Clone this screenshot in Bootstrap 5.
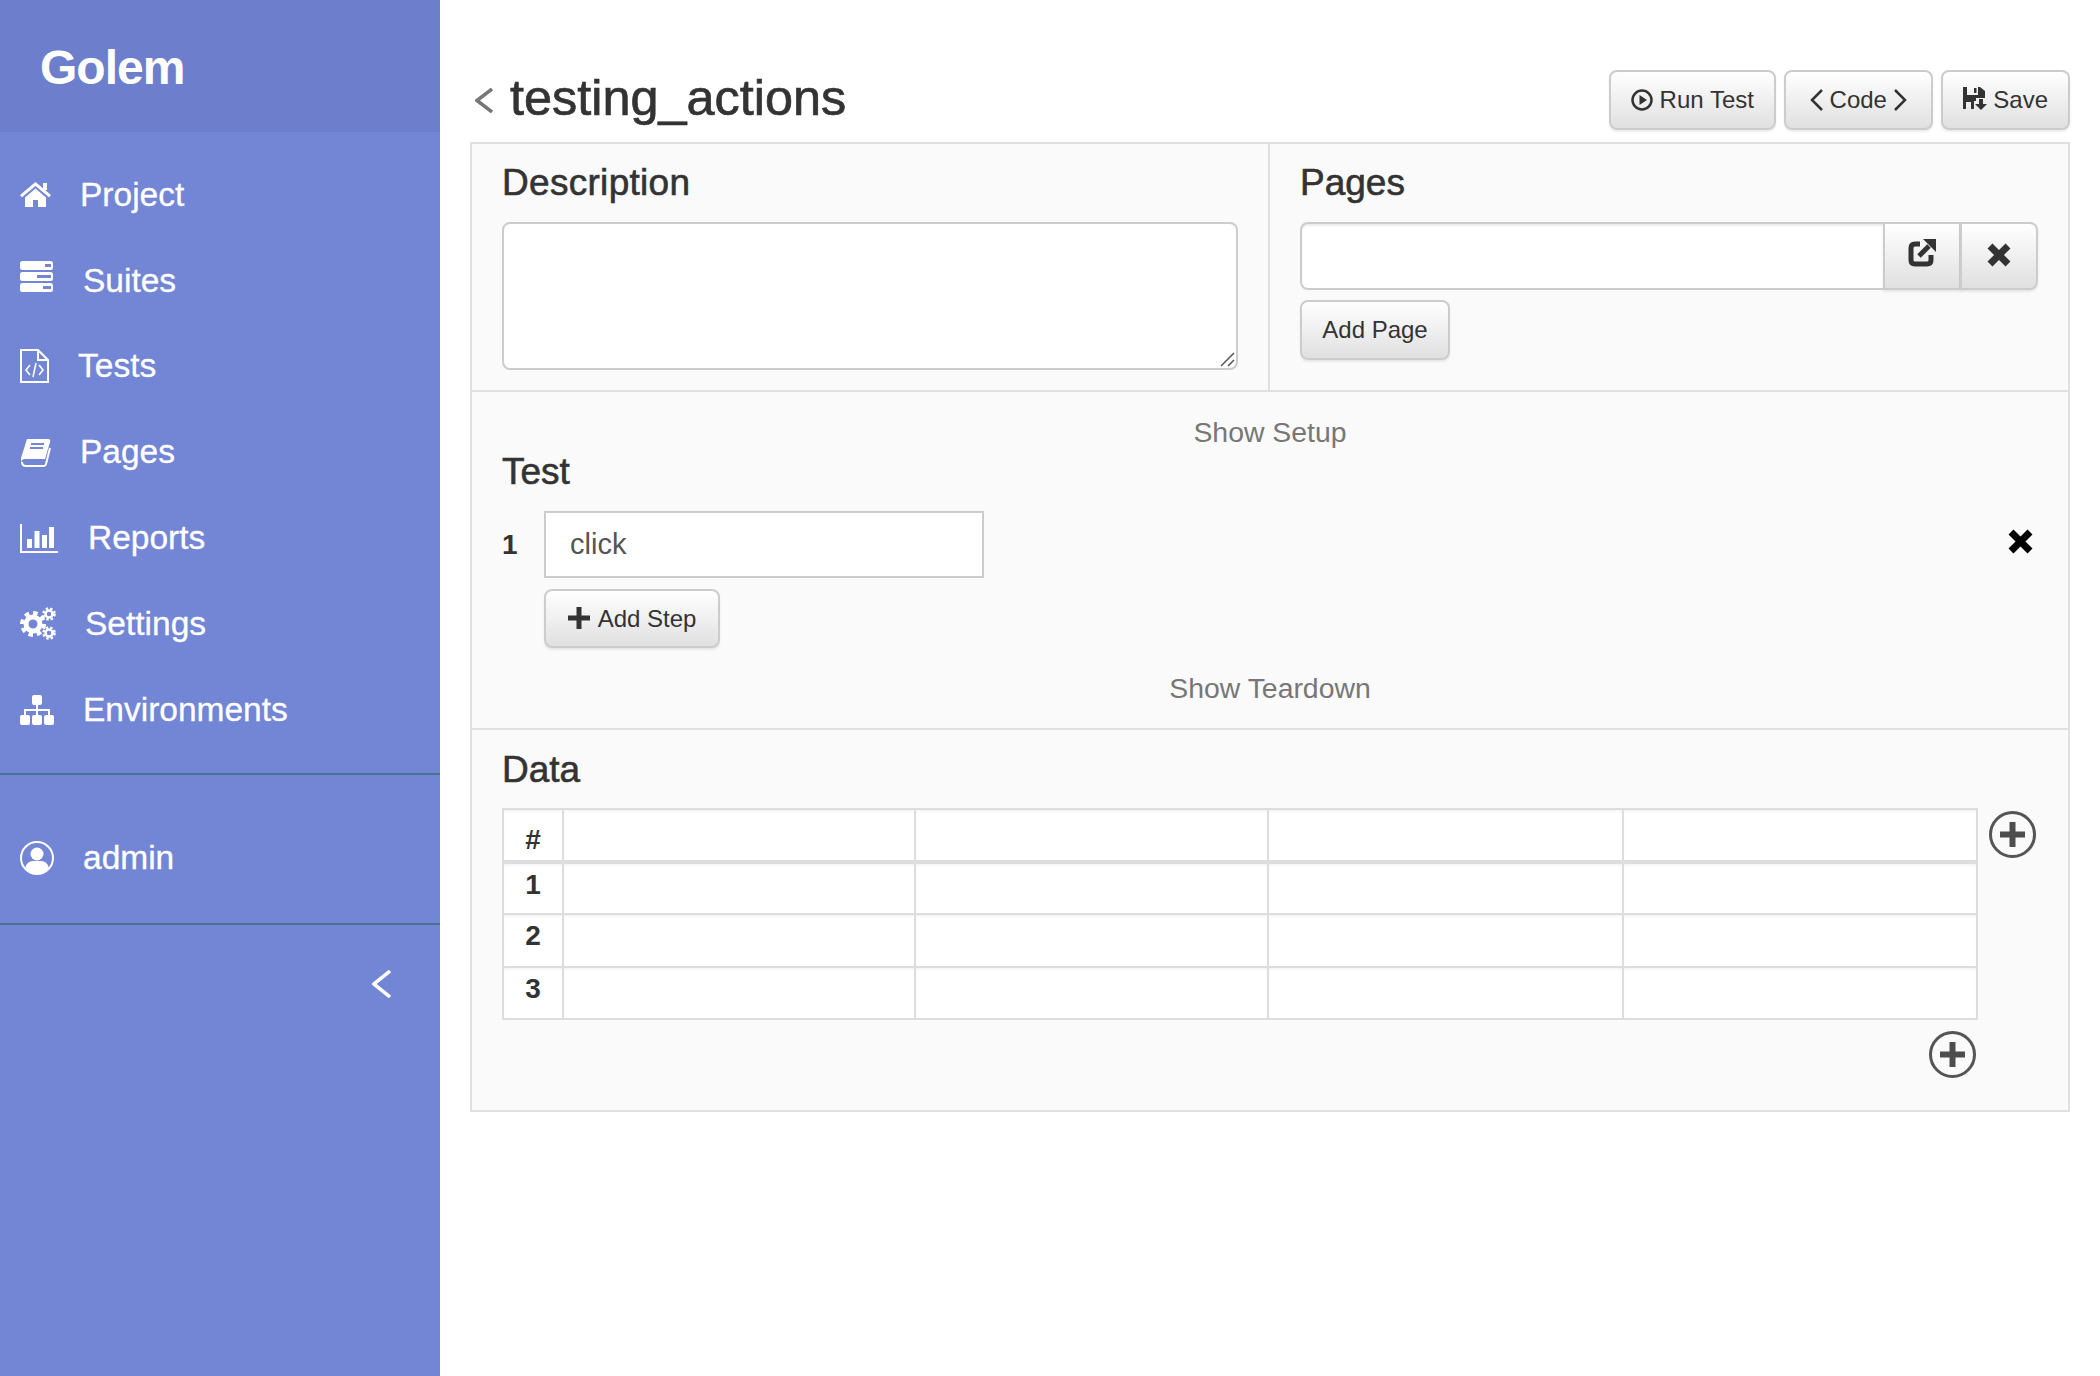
<!DOCTYPE html>
<html>
<head>
  <meta charset="utf-8">
  <title>testing_actions</title>
  <link href="https://cdn.jsdelivr.net/npm/bootstrap@5.3.3/dist/css/bootstrap.min.css" rel="stylesheet">
  <style>
    body { font-family: "Liberation Sans", Arial, sans-serif; color: #333; background: #fff; }

    /* sidebar */
    .side-bar { width: 440px; flex: none; background: #7386d5; color: #fff; min-height: 100vh; }
    .side-head { height: 132px; background: #6d7fcc; padding: 38px 0 0 40px; }
    .side-head h3 { font-size: 48px; line-height: 60px; font-weight: 700; letter-spacing: -1px; margin: 0; }
    .side-nav { padding: 20px 0 20px; border-bottom: 2px solid #47748b; }
    .side-user { padding: 41px 0 22px; border-bottom: 2px solid #47748b; }
    .side-link { display: flex; align-items: center; height: 85.8px; padding: 0 0 0 20px; color: #fff; font-size: 33.5px; -webkit-text-stroke: .3px #fff; text-decoration: none; }
    .side-link svg { flex: none; }
    .m-home { margin-right: 29px; }
    .m-suites { margin-right: 30px; margin-bottom: 8px; }
    .m-tests { margin-right: 29px; }
    .m-pages { margin-right: 29px; }
    .m-reports { margin-right: 30px; }
    .m-settings { margin-right: 29px; }
    .m-envs { margin-right: 29px; }
    .m-admin { margin-right: 29px; }
    .side-collapse { padding: 45px 49px 0 0; text-align: right; line-height: 0; }

    /* main */
    .main-area { flex: 1; padding: 70px 30px 0; min-width: 0; }
    .title-row { height: 60px; margin-bottom: 12px; }
    .page-title { font-size: 50.4px; line-height: 55px; font-weight: 400; -webkit-text-stroke: .7px #333; margin: 0 0 0 17px; }
    .back-arrow { margin: 18px 0 0 5px; flex: none; }
    .head-btns { gap: 8px; }

    .grad-btn { font-size: 24px; line-height: 34px; color: #333; padding: 10px 20px; border: 2px solid #ccc; border-radius: 8px;
      background: linear-gradient(to bottom, #fff 0, #e0e0e0 100%); box-shadow: inset 0 2px 0 rgba(255,255,255,.15), 0 2px 2px rgba(0,0,0,.075); }
    .grad-btn svg { vertical-align: -3px; }
    .code-btn { padding: 10px 24px; }

    .test-panel { border: 2px solid #e0e0e0; background: #fafafa; height: 970px; }
    .panel-part { border-bottom: 2px solid #e0e0e0; }
    .panel-part:last-child { border-bottom: 0; }
    .part-left { padding: 19px 30px 20px; border-right: 2px solid #e0e0e0; }
    .part-right { padding: 19px 30px 20px; }
    .part-title { font-size: 37px; line-height: 40px; font-weight: 400; -webkit-text-stroke: .6px #333; margin: 0; }
    .part-left .part-title { letter-spacing: .3px; }
    .desc-wrap { position: relative; margin-top: 19px; }
    .desc-box { height: 148px; border: 2px solid #ccc; border-radius: 8px; display: block; width: 100%; outline: none; resize: none; }
    .desc-grip { position: absolute; right: 3px; bottom: 3px; }
    .pages-group { margin-top: 19px; }
    .pages-group .form-control { height: 68px; border: 2px solid #ccc; border-right: 0; border-radius: 8px 0 0 8px; box-shadow: inset 0 2px 2px rgba(0,0,0,.075); }
    .pages-group .grad-btn { width: 78px; padding: 0; margin: 0; border-radius: 0; border-left-width: 2px; }
    .pages-group .grad-btn:last-child { border-radius: 0 8px 8px 0; margin-left: -2px; }
    .add-page { margin-top: 10px; height: 60px; width: 150px; padding: 0; }

    .steps-part { padding: 20px 30px 20px; }
    .toggle-text { font-size: 28.4px; line-height: 40px; color: #777; text-align: center; }
    .step-row { margin-top: 19px; }
    .step-num { width: 42px; font-size: 28px; font-weight: 700; flex: none; }
    .step-input { width: 440px; height: 67px; border: 2px solid #ccc; background: #fff; padding: 0 24px; font-size: 29px; color: #555; outline: none; }
    .step-del { margin: 0 5px 0 auto; flex: none; position: relative; top: -3px; }
    .add-step { margin: 11px 0 20px 42px; height: 59px; width: 176px; padding: 0; display: block; }
    .add-step svg { margin-right: 8px; vertical-align: -2px; }

    .data-part { padding: 20px 30px 31px; }
    .grid-row { margin-top: 18px; }
    .data-grid { width: 1476px; height: 212px; margin: 0; table-layout: fixed; --bs-table-bg: #fff; --bs-table-border-color: #ddd; flex: none; border-color: #ddd; }
    .data-grid td, .data-grid th { padding: 0; border-width: 2px; box-shadow: inset 0 2px 2px rgba(0,0,0,.04); }
    .data-grid .num-col { width: 60px; text-align: center; font-size: 28px; line-height: 32px; font-weight: 700; padding-top: 5px; color: #333; }
    .data-grid .w-a { width: 352px; }
    .data-grid .w-b { width: 353px; }
    .data-grid .w-c { width: 355px; }
    .data-grid thead th { height: 53px; border-bottom-width: 4px; vertical-align: bottom; }
    .data-grid thead .num-col { font-size: 28px; padding: 0 0 4px; }
    .data-grid tbody td, .data-grid tbody th { height: 52px; vertical-align: top; }
    .add-col { margin: 3px 0 0 11px; flex: none; }
    .add-row-wrap { margin: 11px 62px 0 0; line-height: 0; }
  </style>
</head>
<body>
<div class="d-flex">

  <nav class="side-bar">
    <div class="side-head"><h3>Golem</h3></div>

    <div class="side-nav">
      <a class="side-link" href="#">
        <svg class="m-home" width="31" height="25" viewBox="0 0 31 25" fill="#fff"><path d="M15.5 0 31 13l-2 2.3L15.5 4 2 15.3 0 13Z"/><rect x="23" y="1" width="4" height="7"/><path d="M5 15.5 15.5 6.5 26 15.5V25h-8v-7h-5v7H5Z"/></svg>Project</a>
      <a class="side-link" href="#">
        <svg class="m-suites" width="33" height="31" viewBox="0 0 33 31"><rect width="33" height="9" rx="2.5" fill="#fff"/><rect y="11" width="33" height="9" rx="2.5" fill="#fff"/><rect y="22" width="33" height="9" rx="2.5" fill="#fff"/><rect x="25" y="3" width="6" height="3" fill="#7386d5"/><rect x="17" y="14" width="14" height="3" fill="#7386d5"/><rect x="23" y="25" width="8" height="3" fill="#7386d5"/></svg>Suites</a>
      <a class="side-link" href="#">
        <svg class="m-tests" width="29" height="34" viewBox="0 0 29 34" fill="none" stroke="#fff" stroke-width="2"><path d="M1 1H18L28 11V33H1Z"/><path d="M18 1V11H28"/><path d="M10 16 6 21 10 26M19 16 23 21 19 26M16 14 13 28" stroke-width="1.6"/></svg>Tests</a>
      <a class="side-link" href="#">
        <svg class="m-pages" width="31" height="29" viewBox="0 0 31 29"><path d="M7 1H28Q31 1 30 4L25 21H5Q2 21 1 24V20Z" fill="#fff"/><path d="M2 24Q2 28 6 28H24Q25.500 28 26 26L30 10" fill="none" stroke="#fff" stroke-width="2"/><path d="M11 6H24M10 10H23" stroke="#7386d5" stroke-width="2"/></svg>Pages</a>
      <a class="side-link" href="#">
        <svg class="m-reports" width="38" height="29" viewBox="0 0 38 29" fill="#fff"><path d="M1 0V28H38" fill="none" stroke="#fff" stroke-width="2"/><rect x="7" y="15" width="5" height="9"/><rect x="14.500" y="7" width="5" height="17"/><rect x="22" y="11" width="5" height="13"/><rect x="29" y="3" width="5" height="21"/></svg>Reports</a>
      <a class="side-link" href="#">
        <svg class="m-settings" width="36" height="33" viewBox="0 0 36 33" fill="none" stroke="#fff"><circle cx="13" cy="17" r="7" stroke-width="5"/><circle cx="13" cy="17" r="11" stroke-width="4" stroke-dasharray="4.6 4"/><circle cx="29" cy="7" r="3.500" stroke-width="2.500"/><circle cx="29" cy="7" r="5.500" stroke-width="2.500" stroke-dasharray="2.400 2"/><circle cx="29" cy="26" r="3.500" stroke-width="2.500"/><circle cx="29" cy="26" r="5.500" stroke-width="2.500" stroke-dasharray="2.400 2"/></svg>Settings</a>
      <a class="side-link" href="#">
        <svg class="m-envs" width="34" height="30" viewBox="0 0 34 30" fill="#fff"><rect x="12" width="10" height="10" rx="2"/><path d="M17 10V21M5 21V15H29V21" fill="none" stroke="#fff" stroke-width="2"/><rect y="20" width="10" height="10" rx="2"/><rect x="12" y="20" width="10" height="10" rx="2"/><rect x="24" y="20" width="10" height="10" rx="2"/></svg>Environments</a>
    </div>

    <div class="side-user">
      <a class="side-link" href="#">
        <svg class="m-admin" width="34" height="34" viewBox="0 0 34 34" fill="#fff"><circle cx="17" cy="17" r="16" fill="none" stroke="#fff" stroke-width="2"/><circle cx="17" cy="13" r="6.500"/><path d="M5 27Q7 20 13 20H21Q27 20 29 27 24 33 17 33 10 33 5 27Z"/></svg>admin</a>
    </div>

    <div class="side-collapse">
      <svg width="19" height="28" viewBox="0 0 19 28" fill="none" stroke="#fff" stroke-width="3.500"><path d="M18 1 2 14 18 27"/></svg>
    </div>
  </nav>

  <main class="main-area">
    <div class="title-row d-flex justify-content-between">
      <div class="d-flex">
        <svg class="back-arrow" width="18" height="25" viewBox="0 0 18 25" fill="none" stroke="#777" stroke-width="3.500"><path d="M17 1 2 12.500 17 24"/></svg>
        <h2 class="page-title">testing_actions</h2>
      </div>
      <div class="head-btns d-flex">
        <button type="button" class="btn grad-btn">
          <svg width="22" height="22" viewBox="0 0 22 22"><circle cx="11" cy="11" r="9.500" fill="none" stroke="#333" stroke-width="2.500"/><path d="M8.500 6 16 11 8.500 16Z" fill="#333"/></svg>
          Run Test</button>
        <button type="button" class="btn grad-btn code-btn">
          <svg width="13" height="22" viewBox="0 0 13 22" fill="none" stroke="#333" stroke-width="2.500"><path d="M12 1 2 11 12 21"/></svg>
          Code
          <svg width="13" height="22" viewBox="0 0 13 22" fill="none" stroke="#333" stroke-width="2.500"><path d="M1 1 11 11 1 21"/></svg></button>
        <button type="button" class="btn grad-btn">
          <svg width="24" height="24" viewBox="0 0 24 24" fill="#333"><path d="M0 0H4V8H15V0H17L22 4V11H13V14H11V22H8V15H3V22H0Z"/><rect x="11" y="1" width="2.500" height="5"/><path d="M16 12H20V17H24L18 23 12 17H16Z"/></svg>
          Save</button>
      </div>
    </div>

    <div class="test-panel">
      <div class="panel-part row g-0">
        <div class="col-6 part-left">
          <h3 class="part-title">Description</h3>
          <div class="desc-wrap">
            <textarea class="desc-box"></textarea>
            <svg class="desc-grip" width="15" height="15" viewBox="0 0 15 15" fill="none" stroke="#555" stroke-width="1.500"><path d="M1 14 14 1M8 14 14 8"/></svg>
          </div>
        </div>
        <div class="col-6 part-right">
          <h3 class="part-title">Pages</h3>
          <div class="input-group pages-group">
            <input type="text" class="form-control">
            <button type="button" class="btn grad-btn">
              <svg width="28" height="28" viewBox="0 0 28 28" fill="none" stroke="#333" stroke-width="5"><path d="M12 5H7Q3 5 3 9V21Q3 25 7 25H19Q23 25 23 21V16"/><path d="M11 17 21 7"/><path d="M15 0H28V13Z" fill="#333" stroke="none"/></svg>
            </button>
            <button type="button" class="btn grad-btn">
              <svg width="24" height="24" viewBox="0 0 24 24" fill="none" stroke="#333" stroke-width="7"><path d="M3 3 21 21M21 3 3 21"/></svg>
            </button>
          </div>
          <button type="button" class="btn grad-btn add-page">Add Page</button>
        </div>
      </div>

      <div class="panel-part steps-part">
        <div class="toggle-text">Show Setup</div>
        <h3 class="part-title">Test</h3>
        <div class="step-row d-flex align-items-center">
          <div class="step-num">1</div>
          <input type="text" class="step-input" value="click">
          <svg class="step-del" width="25" height="25" viewBox="0 0 25 25" fill="none" stroke="#000" stroke-width="7"><path d="M3 3 22 22M22 3 3 22"/></svg>
        </div>
        <button type="button" class="btn grad-btn add-step">
          <svg width="22" height="22" viewBox="0 0 22 22" fill="#333"><path d="M8.500 0H13.500V8.500H22V13.500H13.500V22H8.500V13.500H0V8.500H8.500Z"/></svg>Add Step</button>
        <div class="toggle-text">Show Teardown</div>
      </div>

      <div class="panel-part data-part">
        <h3 class="part-title">Data</h3>
        <div class="grid-row d-flex align-items-start">
          <table class="table table-bordered data-grid">
            <thead>
              <tr><th class="num-col">#</th><th class="w-a"></th><th class="w-b"></th><th class="w-c"></th><th></th></tr>
            </thead>
            <tbody>
              <tr><th class="num-col">1</th><td></td><td></td><td></td><td></td></tr>
              <tr><th class="num-col">2</th><td></td><td></td><td></td><td></td></tr>
              <tr><th class="num-col">3</th><td></td><td></td><td></td><td></td></tr>
            </tbody>
          </table>
          <svg class="add-col" width="47" height="47" viewBox="0 0 47 47"><circle cx="23.500" cy="23.500" r="22" fill="none" stroke="#555" stroke-width="3"/><path d="M23.500 11V36M11 23.500H36" stroke="#4d4d4d" stroke-width="6"/></svg>
        </div>
        <div class="add-row-wrap text-end">
          <svg width="47" height="47" viewBox="0 0 47 47"><circle cx="23.500" cy="23.500" r="22" fill="none" stroke="#555" stroke-width="3"/><path d="M23.500 11V36M11 23.500H36" stroke="#4d4d4d" stroke-width="6"/></svg>
        </div>
      </div>
    </div>
  </main>
</div>
<script src="https://cdn.jsdelivr.net/npm/bootstrap@5.3.3/dist/js/bootstrap.bundle.min.js"></script>
</body>
</html>
